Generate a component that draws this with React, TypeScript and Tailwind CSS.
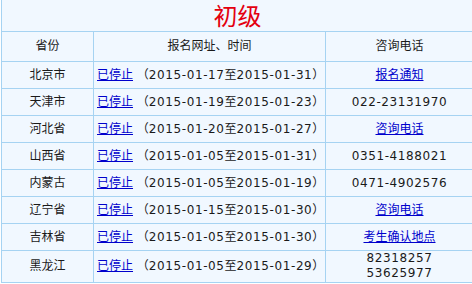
const rows = [
  { prov: '北京市', from: '2015-01-17', to: '2015-01-31', tel: '报名通知', link: true },
  { prov: '天津市', from: '2015-01-19', to: '2015-01-23', tel: '022-23131970' },
  { prov: '河北省', from: '2015-01-20', to: '2015-01-27', tel: '咨询电话', link: true },
  { prov: '山西省', from: '2015-01-05', to: '2015-01-31', tel: '0351-4188021' },
  { prov: '内蒙古', from: '2015-01-05', to: '2015-01-19', tel: '0471-4902576' },
  { prov: '辽宁省', from: '2015-01-15', to: '2015-01-30', tel: '咨询电话', link: true },
  { prov: '吉林省', from: '2015-01-05', to: '2015-01-30', tel: '考生确认地点', link: true },
]

const cell = 'border border-[#a6d3f2] p-0'
const num = 'tracking-[0.6px]'

function Dates({ from, to }: { from: string; to: string }) {
  return (
    <>
      {' （'}
      <span className={num}>{from}</span>至<span className={num}>{to}</span>）
    </>
  )
}

export default function App() {
  return (
    <div className="w-[472px] h-[284px] overflow-hidden bg-white">
      <table
        className="ml-px w-[473px] border-collapse bg-[#f1f8ff] text-[12px] text-[#1a1a1a] table-fixed"
        style={{ fontFamily: '"DejaVu Sans", "Noto Sans CJK SC", sans-serif' }}
      >
        <colgroup>
          <col className="w-[92px]" />
          <col className="w-[232px]" />
          <col />
        </colgroup>
        <tbody>
          <tr className="h-[31px]">
            <td colSpan={3} className="border-x border-b border-[#a6d3f2] p-0 text-center align-middle">
              <span
                className="text-[24px] leading-[28px] text-[#e4000f]"
                style={{ fontFamily: '"Noto Sans CJK SC", sans-serif' }}
              >
                初级
              </span>
            </td>
          </tr>
          <tr className="h-[30px] text-center">
            <td className={cell}>省份</td>
            <td className={cell}>报名网址、时间</td>
            <td className={cell}>咨询电话</td>
          </tr>
          {rows.map((r) => (
            <tr key={r.prov} className="h-[27px]">
              <td className={cell + ' text-center'}>{r.prov}</td>
              <td className={cell + ' pl-[3px] whitespace-nowrap'}>
                <a href="#" className="text-[#0000cc] underline">已停止</a>
                <Dates from={r.from} to={r.to} />
              </td>
              <td className={cell + ' text-center'}>
                {r.link ? (
                  <a href="#" className="text-[#0000cc] underline">{r.tel}</a>
                ) : (
                  <span className={num}>{r.tel}</span>
                )}
              </td>
            </tr>
          ))}
          <tr className="h-[32px]">
            <td className={cell + ' text-center'}>黑龙江</td>
            <td className={cell + ' pl-[3px] whitespace-nowrap'}>
              <a href="#" className="text-[#0000cc] underline">已停止</a>
              <Dates from="2015-01-05" to="2015-01-29" />
            </td>
            <td className={cell + ' text-center leading-[15px] ' + num}>
              82318257
              <br />
              53625977
            </td>
          </tr>
        </tbody>
      </table>
    </div>
  )
}
